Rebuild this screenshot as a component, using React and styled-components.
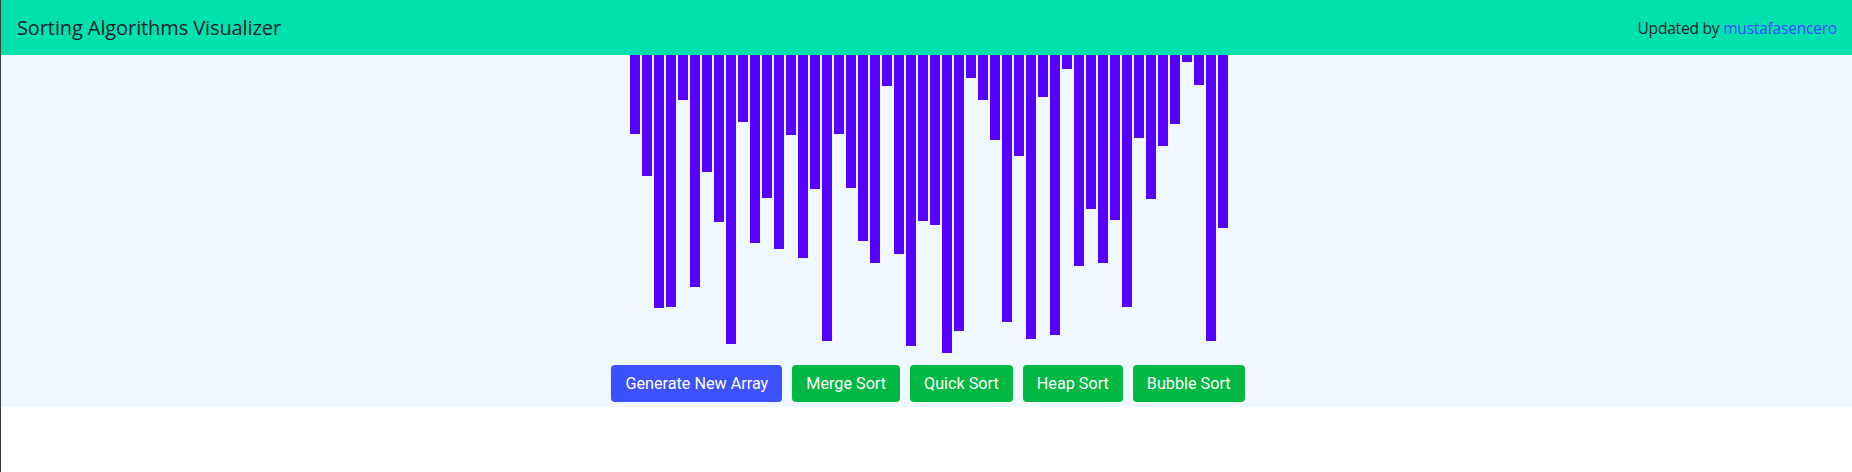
import React, { useState } from 'react'
import styled, { createGlobalStyle } from 'styled-components'

const GlobalStyle = createGlobalStyle`
  html, body {
    margin: 0;
    padding: 0;
    background: #ffffff;
  }
  body {
    font-family: "Open Sans", "Noto Sans", sans-serif;
    border-left: 1px solid #3b3b3b;
    min-height: 472px;
    box-sizing: border-box;
  }
`

const Navbar = styled.nav`
  height: 55px;
  background: #00e1ae;
  display: flex;
  align-items: center;
  justify-content: space-between;
  padding: 0 15px 0 16px;
  color: #14232a;
`

const Brand = styled.span`
  font-size: 20px;
  letter-spacing: -0.1px;
`

const Credit = styled.span`
  font-size: 15.5px;
  letter-spacing: -0.2px;
  a {
    color: #3a49ff;
    text-decoration: none;
  }
`

const Stage = styled.main`
  background: #eff7ff;
  padding-bottom: 5px;
`

const BarRow = styled.div`
  height: 310px;
  display: flex;
  justify-content: center;
  align-items: flex-start;
  padding-left: 4px;
`

const Bar = styled.div`
  width: 10px;
  margin: 0 1px;
  background: #5600ff;
`

const ButtonRow = styled.div`
  display: flex;
  justify-content: center;
  gap: 10px;
  padding-left: 3px;
`

const Button = styled.button`
  height: 37px;
  padding: 0 14px;
  border: none;
  border-radius: 4px;
  font-family: Roboto, "Open Sans", sans-serif;
  font-size: 16.2px;
  color: #ffffff;
  background: ${(props) => (props.primary ? '#3d52fe' : '#00b843')};
  cursor: pointer;
`

const heights = [
  79, 121, 253, 252, 45, 232, 117, 167, 289, 67,
  188, 143, 194, 80, 203, 134, 286, 79, 133, 186,
  208, 31, 199, 291, 166, 170, 298, 276, 23, 45,
  85, 267, 101, 284, 42, 280, 14, 211, 154, 208,
  165, 252, 83, 144, 91, 69, 7, 30, 286, 173,
]

const App = () => {
  const [array] = useState(heights)

  return (
    <>
      <GlobalStyle />
      <Navbar>
        <Brand>Sorting Algorithms Visualizer</Brand>
        <Credit>
          Updated by <a href="#">mustafasencero</a>
        </Credit>
      </Navbar>
      <Stage>
        <BarRow>
          {array.map((h, i) => (
            <Bar key={i} style={{ height: h }} />
          ))}
        </BarRow>
        <ButtonRow>
          <Button primary>Generate New Array</Button>
          <Button>Merge Sort</Button>
          <Button>Quick Sort</Button>
          <Button>Heap Sort</Button>
          <Button>Bubble Sort</Button>
        </ButtonRow>
      </Stage>
    </>
  )
}

export default App
